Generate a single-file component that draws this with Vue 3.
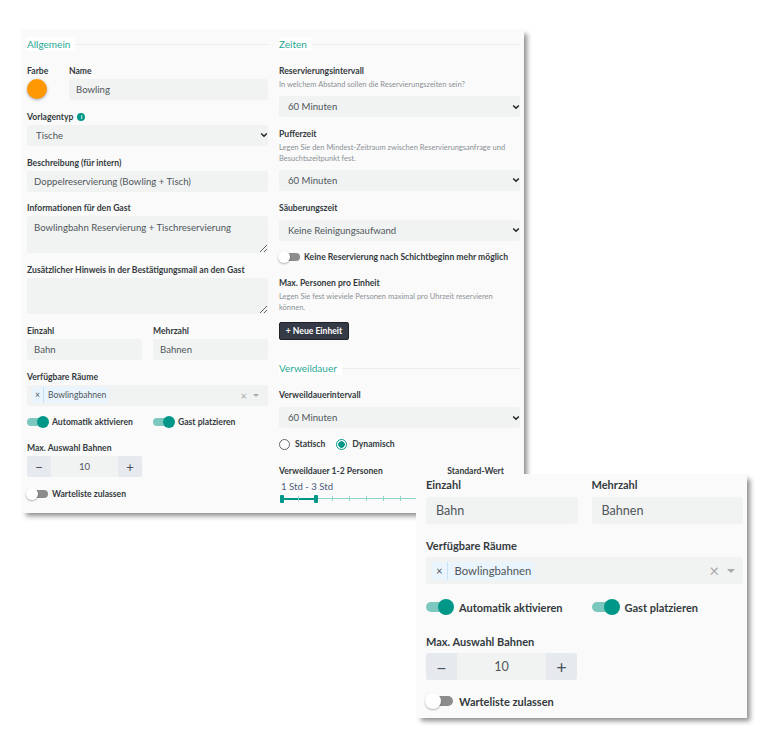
<template>
  <div class="page">
    <div class="panel">
      <div class="col">
        <div class="legend"><span>Allgemein</span></div>

        <div class="row color-row">
          <div class="color-field">
            <label>Farbe</label>
            <div class="swatch"></div>
          </div>
          <div class="field grow">
            <label>Name</label>
            <input type="text" value="Bowling" />
          </div>
        </div>

        <div class="field">
          <label>Vorlagentyp <span class="info">i</span></label>
          <select><option>Tische</option></select>
        </div>
        <div class="field">
          <label>Beschreibung (für intern)</label>
          <input type="text" value="Doppelreservierung (Bowling + Tisch)" />
        </div>
        <div class="field">
          <label>Informationen für den Gast</label>
          <textarea>Bowlingbahn Reservierung + Tischreservierung</textarea>
        </div>
        <div class="field">
          <label>Zusätzlicher Hinweis in der Bestätigungsmail an den Gast</label>
          <textarea></textarea>
        </div>

        <div class="row two">
          <div class="field">
            <label>Einzahl</label>
            <input type="text" value="Bahn" />
          </div>
          <div class="field">
            <label>Mehrzahl</label>
            <input type="text" value="Bahnen" />
          </div>
        </div>

        <div class="field">
          <label>Verfügbare Räume</label>
          <div class="multi">
            <span class="tag"><i>×</i><b>Bowlingbahnen</b></span>
            <span class="multi-clear">×</span>
            <span class="multi-caret"></span>
          </div>
        </div>

        <div class="row two toggles">
          <div class="toggle-row"><span class="switch on"></span>Automatik aktivieren</div>
          <div class="toggle-row"><span class="switch on"></span>Gast platzieren</div>
        </div>

        <div class="field">
          <label>Max. Auswahl Bahnen</label>
          <div class="spinner">
            <button>−</button>
            <span>10</span>
            <button>+</button>
          </div>
        </div>

        <div class="toggle-row"><span class="switch"></span>Warteliste zulassen</div>
      </div>

      <div class="col">
        <div class="legend"><span>Zeiten</span></div>

        <div class="field">
          <label>Reservierungsintervall</label>
          <p class="hint">In welchem Abstand sollen die Reservierungszeiten sein?</p>
          <select><option>60 Minuten</option></select>
        </div>
        <div class="field">
          <label>Pufferzeit</label>
          <p class="hint">Legen Sie den Mindest-Zeitraum zwischen Reservierungsanfrage und Besuchtszeitpunkt fest.</p>
          <select><option>60 Minuten</option></select>
        </div>
        <div class="field">
          <label>Säuberungszeit</label>
          <select class="spaced"><option>Keine Reinigungsaufwand</option></select>
        </div>

        <div class="toggle-row wide"><span class="switch"></span>Keine Reservierung nach Schichtbeginn mehr möglich</div>

        <div class="field">
          <label>Max. Personen pro Einheit</label>
          <p class="hint">Legen Sie fest wieviele Personen maximal pro Uhrzeit reservieren können.</p>
          <button class="dark">+ Neue Einheit</button>
        </div>

        <div class="legend second"><span>Verweildauer</span></div>

        <div class="field">
          <label>Verweildauerintervall</label>
          <select class="spaced"><option>60 Minuten</option></select>
        </div>

        <div class="radios">
          <span class="radio"></span>Statisch
          <span class="radio checked"></span>Dynamisch
        </div>

        <div class="split">
          <label>Verweildauer 1-2 Personen</label>
          <label>Standard-Wert</label>
        </div>
        <div class="range-text">1 Std - 3 Std</div>
        <div class="slider">
          <div class="track"></div>
          <div class="track-active"></div>
          <span v-for="n in 14" :key="n" class="tick" :style="{ left: (n - 1) * 17 + 'px' }"></span>
          <span class="handle first"></span>
          <span class="handle last"></span>
        </div>
      </div>
    </div>

    <div class="overlay">
      <div class="row two">
        <div class="field">
          <label>Einzahl</label>
          <input type="text" value="Bahn" />
        </div>
        <div class="field">
          <label>Mehrzahl</label>
          <input type="text" value="Bahnen" />
        </div>
      </div>
      <div class="field">
        <label>Verfügbare Räume</label>
        <div class="multi">
          <span class="tag"><i>×</i><b>Bowlingbahnen</b></span>
          <span class="multi-clear">×</span>
          <span class="multi-caret"></span>
        </div>
      </div>
      <div class="row two toggles">
        <div class="toggle-row"><span class="switch on"></span>Automatik aktivieren</div>
        <div class="toggle-row"><span class="switch on"></span>Gast platzieren</div>
      </div>
      <div class="field spin-field">
        <label>Max. Auswahl Bahnen</label>
        <div class="spinner">
          <button>−</button>
          <span>10</span>
          <button>+</button>
        </div>
      </div>
      <div class="toggle-row"><span class="switch"></span>Warteliste zulassen</div>
    </div>
  </div>
</template>

<script setup>
</script>

<style>
html, body {
  background: #fff;
}
</style>

<style scoped>
.page {
  position: relative;
  width: 765px;
  height: 745px;
  overflow: hidden;
  padding: 29px 0 0 21px;
  box-sizing: border-box;
  font-family: Lato, "Open Sans", sans-serif;
  color: #343a40;
}

.panel {
  width: 503px;
  height: 484px;
  box-sizing: border-box;
  padding: 8px 4px 0 6px;
  display: grid;
  grid-template-columns: 241px 241px;
  column-gap: 11px;
  background: #fafafa;
  box-shadow: 4px 4px 5px -1px rgba(0, 0, 0, 0.45);
  overflow: hidden;
}

.col {
  min-width: 0;
}

.legend {
  height: 14px;
  margin-bottom: 13px;
  display: flex;
  align-items: center;
  font-size: 10px;
  color: #1fa893;
}

.legend::after {
  content: "";
  flex: 1;
  height: 1px;
  background: #eceeee;
}

.legend span {
  background: #fff;
  padding: 0 5px 0 0;
  line-height: 14px;
}

.legend.second {
  margin-top: 21px;
  margin-bottom: 13px;
}

.row {
  display: flex;
}

.two {
  gap: 11px;
}

.two > * {
  flex: 1;
  min-width: 0;
}

.color-row {
  gap: 22px;
}

.color-field {
  width: 20px;
  flex: none;
}

.grow {
  flex: 1;
}

.swatch {
  width: 20px;
  height: 20px;
  margin-top: 1px;
  border-radius: 50%;
  background: #ff9800;
  box-shadow: 0 1px 3px rgba(60, 70, 110, 0.45);
}

label {
  display: block;
  font-size: 8.6px;
  font-weight: 700;
  line-height: 14px;
  white-space: nowrap;
  color: #343a40;
}

.field {
  margin-bottom: 9.8px;
}

.field label {
  margin-bottom: 1px;
}

.info {
  display: inline-block;
  width: 8px;
  height: 8px;
  margin-left: 2px;
  border-radius: 50%;
  background: #009688;
  color: #fff;
  font-size: 6px;
  line-height: 8px;
  text-align: center;
  vertical-align: 1px;
}

input,
select,
textarea {
  display: block;
  width: 100%;
  height: 21px;
  box-sizing: border-box;
  border: 0;
  border-radius: 2px;
  background-color: #f1f3f3;
  font-family: inherit;
  font-size: 9.6px;
  color: #50565b;
  padding: 0 7px;
  outline: none;
}

select {
  padding-left: 9px;
  appearance: none;
  background-image: url("data:image/svg+xml,%3Csvg xmlns='http://www.w3.org/2000/svg' width='8' height='6' viewBox='0 0 8 6'%3E%3Cpath d='M1.2 1.5 4 4.3 6.8 1.5' fill='none' stroke='%23222' stroke-width='1.5'/%3E%3C/svg%3E");
  background-repeat: no-repeat;
  background-position: right 0 center;
}

textarea {
  height: 36.4px;
  padding: 6px 7px;
  line-height: 12px;
}

.hint {
  margin: 0 0 6px;
  font-size: 7.5px;
  line-height: 11px;
  color: #8b9196;
}

select.spaced {
  margin-top: 5px;
}

.multi {
  height: 21px;
  padding: 0 5px;
  display: flex;
  align-items: center;
  border-radius: 2px;
  background: #f1f3f3;
  font-size: 8.6px;
  color: #50565b;
}

.tag {
  display: flex;
  height: 16px;
  line-height: 16px;
  background: #eaf4fd;
  border-radius: 2px;
}

.tag i {
  font-style: normal;
  padding: 0 3px 0 3px;
  border-right: 1px solid #c6e1f8;
}

.tag b {
  font-weight: 400;
  padding: 0 3px 0 4px;
}

.multi-clear {
  margin-left: auto;
  font-size: 11px;
  color: #aaa;
}

.multi-caret {
  width: 0;
  height: 0;
  margin: 0 4px 0 6px;
  border: 3px solid transparent;
  border-top-color: #aaa;
  border-bottom-width: 0;
}

.toggles {
  margin-bottom: 12px;
}

.toggle-row {
  display: flex;
  align-items: center;
  gap: 4px;
  height: 14px;
  font-size: 8.6px;
  font-weight: 700;
  white-space: nowrap;
}

.toggle-row.wide {
  margin: 0 0 12px;
}

.col > .toggle-row:last-child {
  margin-top: 1px;
}

.switch {
  position: relative;
  flex: none;
  width: 21px;
  height: 8px;
  border-radius: 4px;
  background: #8c8c8c;
}

.switch::after {
  content: "";
  position: absolute;
  top: -2px;
  left: -1px;
  width: 12px;
  height: 12px;
  border-radius: 50%;
  background: #fff;
  box-shadow: 0 1px 2px rgba(0, 0, 0, 0.3);
}

.switch.on {
  background: #7cc8be;
}

.switch.on::after {
  left: auto;
  right: -1px;
  background: #009688;
  box-shadow: none;
}

.spinner {
  width: 115px;
  height: 21px;
  display: flex;
  align-items: center;
  border-radius: 2px;
  background: #f1f3f3;
  font-size: 9.6px;
  overflow: hidden;
}

.spinner span {
  flex: 1;
  text-align: center;
  color: #50565b;
}

.spinner button {
  width: 24px;
  height: 100%;
  padding: 0;
  border: 0;
  background: #e6eaee;
  font-family: inherit;
  font-size: 13px;
  color: #495057;
}

.dark {
  display: block;
  height: 18px;
  width: 70px;
  margin-top: 9px;
  padding: 0;
  border: 1px solid #1f2328;
  border-radius: 2px;
  background: #343a46;
  color: #fff;
  font-family: inherit;
  font-size: 8.6px;
  font-weight: 700;
}

.radios {
  display: flex;
  align-items: center;
  height: 14px;
  margin-top: -1px;
  margin-bottom: 13px;
  font-size: 8.6px;
  font-weight: 700;
}

.radio {
  width: 9px;
  height: 9px;
  margin-right: 5px;
  border: 1px solid #666;
  border-radius: 50%;
  background: #fff;
}

.radio.checked {
  margin-left: 11px;
  border-color: #009688;
  background: radial-gradient(circle, #009688 0 3px, #fff 3.5px);
}

.split {
  display: flex;
  justify-content: space-between;
  padding-right: 16px;
}

.range-text {
  margin: 3px 0 0 2px;
  font-size: 9.6px;
  line-height: 12px;
  color: #4a5a7a;
}

.slider {
  position: relative;
  height: 8px;
  margin: 2px 0 0 2px;
}

.track {
  position: absolute;
  top: 3px;
  left: 0;
  right: 0;
  height: 1px;
  background: #8fd3c9;
}

.track-active {
  position: absolute;
  top: 3px;
  left: 0;
  width: 35px;
  height: 2px;
  background: #009688;
}

.tick {
  position: absolute;
  top: 1px;
  width: 1px;
  height: 5px;
  background: #8fd3c9;
}

.handle {
  position: absolute;
  top: 0;
  width: 4px;
  height: 8px;
  border-radius: 1px;
  background: #009688;
}

.handle.first {
  left: -1px;
}

.handle.last {
  left: 33px;
}

/* enlarged detail window over the form */
.overlay {
  position: absolute;
  left: 416px;
  top: 474px;
  width: 331px;
  height: 244px;
  box-sizing: border-box;
  padding: 3px 4px 0 10px;
  background: #fafafa;
  box-shadow: 4px 4px 5px -1px rgba(0, 0, 0, 0.45);
}

.overlay label,
.overlay .toggle-row {
  font-size: 11px;
}

.overlay label {
  line-height: 16px;
  margin-bottom: 3px;
}

.overlay .two {
  gap: 14px;
}

.overlay .two label {
  margin-bottom: 4px;
}

.overlay .field {
  margin-bottom: 14px;
}

.overlay .spin-field {
  margin-bottom: 12px;
}

.overlay input {
  height: 27px;
  padding: 0 10px;
  font-size: 12.6px;
  border-radius: 3px;
}

.overlay .multi {
  height: 27px;
  font-size: 11.3px;
  padding: 0 6px;
  border-radius: 3px;
}

.overlay .tag {
  height: 18px;
  line-height: 18px;
}

.overlay .tag i {
  padding: 0 4px;
}

.overlay .tag b {
  padding: 0 4px 0 7px;
}

.overlay .multi-clear {
  font-size: 17px;
}

.overlay .multi-caret {
  margin: 0 2px 0 8px;
  border-width: 4px;
  border-bottom-width: 0;
}

.overlay .toggles {
  margin-bottom: 18px;
}

.overlay .toggle-row {
  height: 18px;
  gap: 6px;
}

.overlay .switch {
  width: 27px;
  height: 10px;
  border-radius: 5px;
}

.overlay .switch::after {
  top: -3px;
  width: 16px;
  height: 16px;
}

.overlay .spinner {
  width: 151px;
  height: 27px;
  font-size: 12.6px;
  border-radius: 3px;
}

.overlay .spinner button {
  width: 31px;
  font-size: 18px;
}
</style>
